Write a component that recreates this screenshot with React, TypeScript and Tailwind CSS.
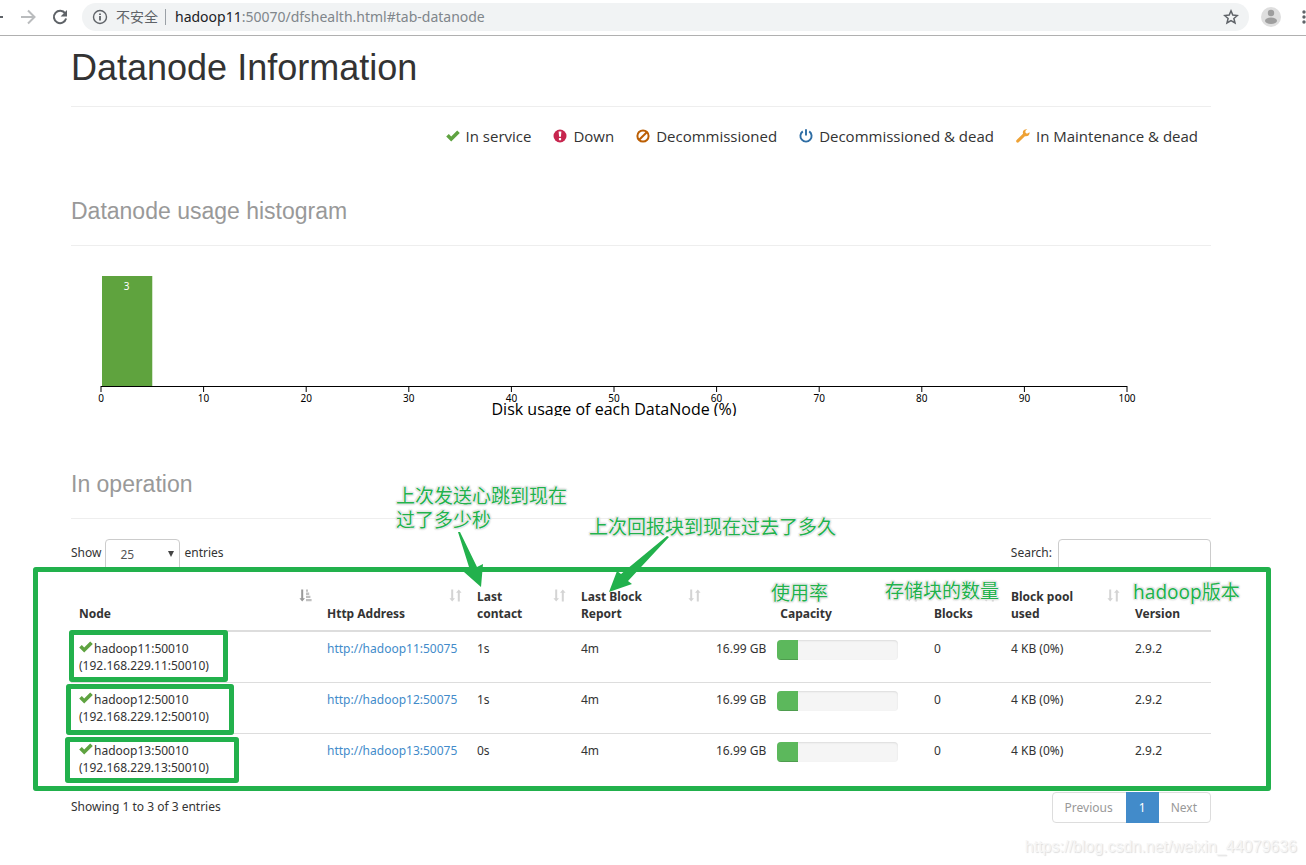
import type { ReactNode } from "react";

type LegendItem = { label: string; color: string; icon: ReactNode };

const nodes = [
  { name: "hadoop11", ip: "192.168.229.11", contact: "1s" },
  { name: "hadoop12", ip: "192.168.229.12", contact: "1s" },
  { name: "hadoop13", ip: "192.168.229.13", contact: "0s" },
];

const ticks = [0, 10, 20, 30, 40, 50, 60, 70, 80, 90, 100];

const checkPath = "M0.2 7.6 L2.8 5 L5.2 7.4 L11.2 1.4 L13.8 4 L5.2 12.6 Z";

const legend: LegendItem[] = [
  {
    label: "In service",
    color: "text-[#5fa341]",
    icon: <path d={checkPath} fill="currentColor" />,
  },
  {
    label: "Down",
    color: "text-[#c7254e]",
    icon: (
      <>
        <circle cx="7" cy="7" r="6.5" fill="currentColor" />
        <path d="M5.6 2.6h2.8l-.5 5.2H6.1zM5.9 9h2.2v2.2H5.9z" fill="#fff" />
      </>
    ),
  },
  {
    label: "Decommissioned",
    color: "text-[#bc5f04]",
    icon: (
      <g fill="none" stroke="currentColor" strokeWidth="2">
        <circle cx="7" cy="7" r="5.6" />
        <path d="M3.2 10.8 10.8 3.2" />
      </g>
    ),
  },
  {
    label: "Decommissioned & dead",
    color: "text-[#2e6da4]",
    icon: (
      <g fill="none" stroke="currentColor" strokeWidth="1.9">
        <path d="M3.8 2.4a5.6 5.6 0 1 0 6.4 0" />
        <path d="M7 .2v6.4" />
      </g>
    ),
  },
  {
    label: "In Maintenance & dead",
    color: "text-[#eea236]",
    icon: (
      <path
        d="M13.6 3.2 10.9 4.8 9.2 3.2 9.8 1.2 11.4.3C9 0 7 1.1 6.8 3.3L7 4.7.6 11.1C0 11.7 0 12.7.6 13.3s1.5.6 2.1 0L8.9 7.2C11.8 7.8 14 5.8 13.6 3.2Z"
        fill="currentColor"
      />
    ),
  },
];

function CheckIcon() {
  return (
    <svg viewBox="0 0 14 14" className="size-[14px] shrink-0 text-[#5fa341]" aria-hidden="true">
      <path d={checkPath} fill="currentColor" />
    </svg>
  );
}

function SortIcon({ active = false }: { active?: boolean }) {
  return (
    <svg
      viewBox="0 0 13 13"
      className={`absolute right-[7px] top-[9px] size-[13px] ${active ? "text-[#999]" : "text-[#d4d4d4]"}`}
      aria-hidden="true"
    >
      <path d="M2.2.5h2v8.8h1.8L3.2 12.5.4 9.3h1.8z" fill="currentColor" />
      {active ? (
        <path d="M7 .5h2v2.3H7zM7 3.6h3.2v2.3H7zM7 6.8h4.4v2.3H7zM7 10h5.6v2.3H7z" fill="#c0c0c0" />
      ) : (
        <path d="M8.8 12.5h2V3.7h1.8L9.8.5 7 3.7h1.8z" fill="currentColor" />
      )}
    </svg>
  );
}

function Th({
  children,
  active,
  center,
}: {
  children: ReactNode;
  active?: boolean;
  center?: boolean;
}) {
  return (
    <th
      scope="col"
      className={`relative border-b-2 border-[#ddd] py-2 pl-2 pr-[30px] align-bottom font-bold ${center ? "text-center" : "text-left"}`}
    >
      {children}
      <SortIcon active={active} />
    </th>
  );
}

function BrowserBar() {
  return (
    <header className="flex h-9 items-center border-b border-[#b0b0b0] bg-white pb-px text-[#5f6368]">
      <button aria-label="Back" className="h-7 w-[3px] overflow-hidden">
        <svg viewBox="0 0 3 16" className="h-4 w-[3px]">
          <path d="M0 8h3" stroke="currentColor" strokeWidth="2" />
        </svg>
      </button>
      <button aria-label="Forward" className="ml-[17px]">
        <svg viewBox="0 0 16 16" className="size-4" fill="none" stroke="#babcbe" strokeWidth="2">
          <path d="M1 8h13M8 1.5 14.5 8 8 14.5" />
        </svg>
      </button>
      <button aria-label="Reload" className="ml-4">
        <svg viewBox="0 0 16 16" className="size-4">
          <path
            d="M13.2 4.4A6.2 6.2 0 1 0 14.1 9.6"
            fill="none"
            stroke="currentColor"
            strokeWidth="2"
          />
          <path d="M15 1v6.4H8.6z" fill="currentColor" />
        </svg>
      </button>
      <div className="ml-[14px] flex h-7 grow items-center rounded-full bg-[#f1f3f4] px-[10px]">
        <button className="flex items-center gap-2 text-sm">
          <svg viewBox="0 0 16 16" className="size-4" fill="none" stroke="currentColor">
            <circle cx="8" cy="8" r="6.5" strokeWidth="1.4" />
            <path d="M8 7v4.5M8 4.4v1.7" strokeWidth="1.8" />
          </svg>
          不安全
        </button>
        <span className="ml-[7px] h-4 w-px bg-[#9aa0a6]" />
        <span className="ml-[9px] text-sm text-[#80868b]">
          <span className="text-[#202124]">hadoop11</span>
          :50070/dfshealth.html#tab-datanode
        </span>
        <button aria-label="Bookmark this page" className="ml-auto">
          <svg viewBox="0 0 16 16" className="size-4">
            <path
              d="M8 1.9 9.8 6.1l4.6.4-3.5 3 1.1 4.5L8 11.6 4 14l1.1-4.5-3.5-3 4.6-.4z"
              fill="none"
              stroke="currentColor"
              strokeWidth="1.5"
            />
          </svg>
        </button>
      </div>
      <button aria-label="Profile" className="ml-3">
        <svg viewBox="0 0 20 20" className="size-5">
          <circle cx="10" cy="10" r="10" fill="#dedede" />
          <circle cx="10" cy="6" r="3.2" fill="#9e9e9e" />
          <ellipse cx="10" cy="13.8" rx="6" ry="3.2" fill="#9e9e9e" />
        </svg>
      </button>
      <button aria-label="Menu" className="ml-5 w-[5px] overflow-hidden">
        <svg viewBox="0 0 5 16" className="h-4 w-[5px]" fill="currentColor">
          <circle cx="3" cy="3" r="1.7" />
          <circle cx="3" cy="8" r="1.7" />
          <circle cx="3" cy="13" r="1.7" />
        </svg>
      </button>
    </header>
  );
}

function Histogram() {
  return (
    <div className="mt-5 h-[150px] overflow-hidden pl-[30px] pr-[84px] text-black">
      <svg className="h-[150px] w-full overflow-visible" role="img" aria-label="Datanode usage histogram">
        <rect x="1" y="10" width="4.9%" height="110" fill="#5fa33e" />
        <text x="2.5%" y="24" textAnchor="middle" className="fill-white text-[10px]">
          3
        </text>
        <line x1="0" x2="100%" y1="120.5" y2="120.5" stroke="#000" />
        {ticks.map((t) => (
          <g key={t}>
            <line x1={`${t}%`} x2={`${t}%`} y1="120" y2="126" stroke="#000" />
            <text x={`${t}%`} y="136" textAnchor="middle" className="text-[10px]">
              {t}
            </text>
          </g>
        ))}
        <text
          x="50%"
          y="149"
          textAnchor="middle"
          className="font-['Open_Sans',sans-serif] text-[16px]"
        >
          Disk usage of each DataNode (%)
        </text>
      </svg>
    </div>
  );
}

const markBox =
  "absolute rounded-[3px] border-[5px] border-[#22b14c] outline outline-[#22b14c]/30 -outline-offset-1";
const markText =
  "absolute whitespace-nowrap text-[19px] leading-6 text-[#22b14c] [text-shadow:0_0_1px_#fff,0_0_2px_#fff,1px_1px_1px_#ddd,-1px_-1px_1px_#ddd,1px_-1px_1px_#ddd,-1px_1px_1px_#ddd,0_0_3px_#bbb]";

// Hand-drawn notes laid over the table; the origin is the table's top left corner.
function Annotations() {
  return (
    <div className="pointer-events-none absolute inset-0">
      <div className={`${markBox} -bottom-[7px] -left-[38px] -right-[60px] -top-[13px]`} />
      <div className={`${markBox} -left-[2px] top-[50px] h-[52px] w-[159px]`} />
      <div className={`${markBox} -left-[5px] top-[104px] h-[51px] w-[168px]`} />
      <div className={`${markBox} -left-[6px] top-[157px] h-[46px] w-[174px]`} />
      <svg className="absolute left-0 top-0 size-px overflow-visible" fill="#22b14c">
        <path d="M387-48 389-48 406-13 412-16 410 7 393-8 398-13Z" />
        <path d="M596-44 598-43 557 1 561 4 538 12 546-9 550-6Z" />
      </svg>
      <p className={`${markText} -top-[96px] left-[325px]`}>
        上次发送心跳到现在
        <br />
        过了多少秒
      </p>
      <p className={`${markText} -top-[65px] left-[518px]`}>上次回报块到现在过去了多久</p>
      <p className={`${markText} left-[700px] top-px`}>使用率</p>
      <p className={`${markText} -top-px left-[814px]`}>存储块的数量</p>
      <p className={`${markText} left-[1062px] top-0`}>hadoop版本</p>
    </div>
  );
}

function DatanodeTable() {
  return (
    <table className="w-full table-fixed border-separate border-spacing-0">
      <colgroup>
        <col className="w-[248px]" />
        <col className="w-[150px]" />
        <col className="w-[104px]" />
        <col className="w-[135px]" />
        <col className="w-[218px]" />
        <col className="w-[77px]" />
        <col className="w-[124px]" />
        <col className="w-[84px]" />
      </colgroup>
      <thead>
        <tr>
          <Th active>Node</Th>
          <Th>Http Address</Th>
          <Th>Last contact</Th>
          <Th>Last Block Report</Th>
          <Th center>Capacity</Th>
          <Th>Blocks</Th>
          <Th>Block pool used</Th>
          <Th>Version</Th>
        </tr>
      </thead>
      <tbody className="[&_td]:p-2 [&_td]:align-top [&>tr+tr>td]:border-t [&>tr+tr>td]:border-[#ddd]">
        {nodes.map((n) => (
          <tr key={n.name}>
            <td>
              <div className="flex gap-px">
                <CheckIcon />
                {n.name}:50010
              </div>
              ({n.ip}:50010)
            </td>
            <td className="whitespace-nowrap">
              <a href={`http://${n.name}:50075`} className="text-[#428bca]">
                http://{n.name}:50075
              </a>
            </td>
            <td>{n.contact}</td>
            <td>4m</td>
            <td>
              <div className="flex gap-[11px]">
                <span className="whitespace-nowrap">16.99 GB</span>
                <div className="h-5 w-[121px] overflow-hidden rounded bg-[#f5f5f5] shadow-[inset_0_1px_2px_rgba(0,0,0,0.1)]">
                  <div className="h-full w-[21px] bg-[#5cb85c] shadow-[inset_0_-1px_0_rgba(0,0,0,0.15)]" />
                </div>
              </div>
            </td>
            <td>0</td>
            <td>4 KB (0%)</td>
            <td>2.9.2</td>
          </tr>
        ))}
      </tbody>
    </table>
  );
}

export default function App() {
  return (
    <div className="overflow-hidden bg-white font-['Noto_Sans','Noto_Sans_CJK_SC',sans-serif] text-[#333]">
      <BrowserBar />
      <main className="pl-[71px] pr-[95px] text-xs leading-[17px]">
        <h1 className="mt-3 border-b border-[#eee] pb-[18px] font-['Liberation_Sans',sans-serif] text-4xl">
          Datanode Information
        </h1>
        <ul className="mt-[19px] flex justify-end gap-[22px] pr-[13px] font-['Open_Sans',sans-serif] text-[15px] leading-5">
          {legend.map((item) => (
            <li key={item.label} className="flex gap-[6px] whitespace-nowrap">
              <svg viewBox="0 0 14 14" className={`mt-[3px] size-[14px] ${item.color}`} aria-hidden="true">
                {item.icon}
              </svg>
              {item.label}
            </li>
          ))}
        </ul>
        <h2 className="mt-[51px] border-b border-[#eee] pb-5 font-['Liberation_Sans',sans-serif] text-[23px] leading-7 text-[#999]">
          Datanode usage histogram
        </h2>
        <Histogram />
        <h2 className="mt-[54px] border-b border-[#eee] pb-5 font-['Liberation_Sans',sans-serif] text-[23px] leading-7 text-[#999]">
          In operation
        </h2>
        <div className="mt-5 flex justify-between">
          <label className="flex gap-1 leading-7">
            Show
            <span className="relative">
              <select
                defaultValue="25"
                className="h-8 w-[75px] appearance-none rounded border border-[#ccc] bg-white pl-[14px] text-[#555]"
              >
                <option>10</option>
                <option>25</option>
                <option>50</option>
                <option>100</option>
              </select>
              <svg viewBox="0 0 6 6" className="absolute right-[6px] top-[12px] size-[6px]" aria-hidden="true">
                <path d="M0 0h6L3 6z" fill="#444" />
              </svg>
            </span>
            entries
          </label>
          <label className="flex gap-[6px] leading-7">
            Search:
            <input type="search" className="h-8 w-[153px] rounded border border-[#ccc] px-2" />
          </label>
        </div>
        <div className="relative mt-[9px]">
          <DatanodeTable />
          <Annotations />
        </div>
        <div className="mt-2 flex items-start justify-between">
          <p className="pt-[6px]">Showing 1 to 3 of 3 entries</p>
          <nav aria-label="Pagination" className="flex h-[31px] rounded border border-[#ddd] text-[#999]">
            <button className="pl-3 pr-[13px]">Previous</button>
            <button aria-current="page" className="-my-px w-[33px] bg-[#428bca] text-white">
              1
            </button>
            <button className="pl-3 pr-[13px]">Next</button>
          </nav>
        </div>
      </main>
      <footer className="mt-3 pr-[9px] text-right font-['Liberation_Sans',sans-serif] text-base text-[#f6f6f6] [text-shadow:1px_1px_1px_#ddd]">
        https://blog.csdn.net/weixin_44079636
      </footer>
    </div>
  );
}
